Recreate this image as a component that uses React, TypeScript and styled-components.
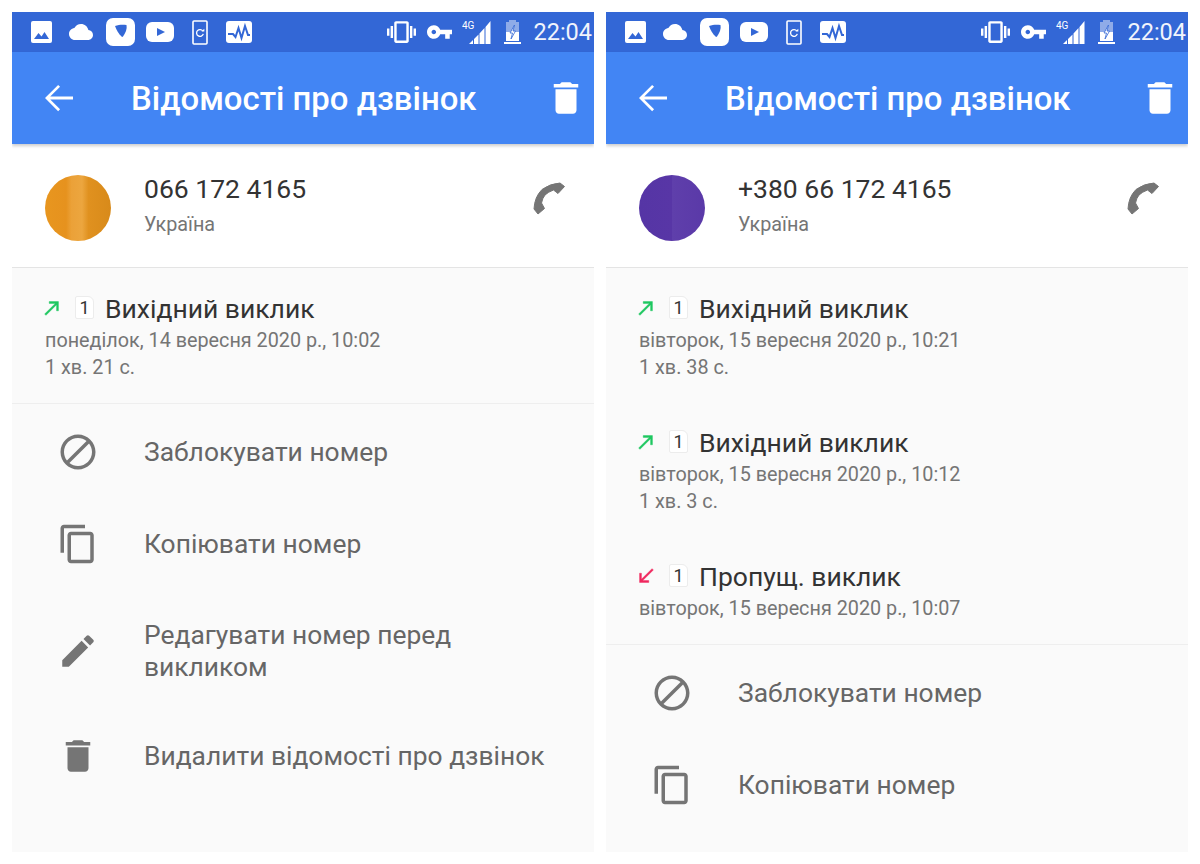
import styled, { createGlobalStyle } from 'styled-components';

const Global = createGlobalStyle`
  html, body { margin: 0; padding: 0; background: #fff; }
  body { font-family: Roboto, "Noto Sans", sans-serif; }
`;

const Page = styled.div`
  display: flex;
  gap: 12px;
  padding: 12px;
  width: 1200px;
  height: 864px;
  box-sizing: border-box;
`;
const Phone = styled.div`
  width: 582px;
  height: 840px;
  overflow: hidden;
  flex-shrink: 0;
  background: #fafafa;
`;
const StatusBar = styled.div`
  height: 40px;
  background: #3367d6;
  display: flex;
  align-items: center;
  padding-left: 19px;
  color: #fff;
`;
const StatusIcon = styled.svg<{ $ml?: number }>`
  display: block;
  flex-shrink: 0;
  fill: #fff;
  margin-left: ${p => p.$ml || 0}px;
`;
const Spacer = styled.div`
  flex: 1;
`;
const Clock = styled.span`
  font-size: 23.5px;
  margin-left: 12px;
  margin-right: 2px;
  color: #f1f4fc;
`;
const AppBar = styled.div`
  height: 92px;
  background: #4285f4;
  display: flex;
  align-items: center;
  padding: 0 7px 0 26px;
  box-shadow: 0 2px 3px rgba(0, 0, 0, 0.2);
  position: relative;
  color: #fff;
`;
const Title = styled.h1`
  flex: 1;
  margin: 2px 0 0 51px;
  font-size: 32.9px;
  font-weight: 500;
  line-height: 40px;
`;
const Icon = styled.svg<{ $color?: string }>`
  width: 42px;
  height: 42px;
  flex-shrink: 0;
  display: block;
  fill: ${p => p.$color || '#757575'};
`;
const ContactRow = styled.div`
  height: 123px;
  background: #fff;
  border-bottom: 1px solid #e4e4e4;
  display: flex;
  align-items: center;
  padding: 0 28px 0 33px;
`;
const Avatar = styled.div<{ $kind: 'orange' | 'purple' }>`
  width: 66px;
  height: 66px;
  border-radius: 50%;
  flex-shrink: 0;
  margin-top: 5px;
  background: ${p =>
    p.$kind === 'orange'
      ? 'linear-gradient(90deg, #e8961f 0%, #e6921e 32%, #eba138 40%, #eca63f 56%, #e0911f 66%, #d88a1a 100%)'
      : 'linear-gradient(90deg, #5535a5 0%, #5836a6 50%, #5f3fab 50%, #5a39a8 100%)'};
`;
const ContactText = styled.div`
  flex: 1;
  margin-left: 33px;
  margin-top: -3px;
`;
const Number = styled.div`
  font-size: 26.5px;
  line-height: 34px;
  color: #333;
`;
const Country = styled.div`
  font-size: 19.8px;
  line-height: 24px;
  margin-top: 7px;
  color: #757575;
`;
const PhoneGlyph = styled.svg`
  width: 33px;
  height: 33px;
  flex-shrink: 0;
  margin-top: -14px;
`;
const CallList = styled.div`
  display: flex;
  flex-direction: column;
  gap: 45px;
  padding: 24px 33px 22px;
  border-bottom: 1px solid #eeeeee;
`;
const CallHead = styled.div`
  display: flex;
  align-items: center;
  height: 35px;
`;
const ArrowIcon = styled.svg<{ $color: string }>`
  width: 22px;
  height: 22px;
  fill: ${p => p.$color};
  stroke: ${p => p.$color};
  stroke-width: 0.5;
  margin: -3px 0 0 -4px;
  flex-shrink: 0;
`;
const SimBadge = styled.span`
  width: 19px;
  height: 23px;
  margin: -5px 11px 0 12px;
  background: #fff;
  border: 1px solid #ececec;
  border-radius: 2px 6px 2px 2px;
  box-sizing: border-box;
  display: flex;
  align-items: center;
  justify-content: center;
  font-size: 18px;
  color: #333;
`;
const CallType = styled.span`
  font-size: 26.5px;
  margin-top: -3px;
  color: #333;
`;
const CallMeta = styled.div`
  font-size: 19.8px;
  line-height: 27px;
  color: #757575;
`;
const ActionList = styled.div`
  padding-top: 2px;
`;
const ActionRow = styled.div<{ $h?: number }>`
  display: flex;
  align-items: center;
  height: ${p => p.$h || 92}px;
  padding-left: 45px;
`;
const ActionLabel = styled.div`
  margin-left: 45px;
  font-size: 26.4px;
  line-height: 32px;
  color: #666;
  max-width: 410px;
`;

const BLUE = '#3367d6';

const paths = {
  back: 'M20 11.200H7l5.600-5.600L11.500 4.500 4 12l7.500 7.500 1.100-1.100L7 12.800h13z',
  trash: 'M6 19c0 1.100.9 2 2 2h8c1.100 0 2-.9 2-2V7H6v12zM19 4h-3.500l-1-1h-5l-1 1H5v2h14V4z',
  block:
    'M12 2C6.480 2 2 6.480 2 12s4.480 10 10 10 10-4.480 10-10S17.520 2 12 2zM4 12c0-4.420 3.580-8 8-8 1.850 0 3.550.63 4.900 1.690L5.690 16.900C4.630 15.550 4 13.850 4 12zm8 8c-1.850 0-3.550-.63-4.900-1.690L18.310 7.100C19.370 8.450 20 10.150 20 12c0 4.420-3.580 8-8 8z',
  copy:
    'M16 1H4c-1.100 0-2 .9-2 2v14h2V3h12V1zm3 4H8c-1.100 0-2 .9-2 2v14c0 1.100.9 2 2 2h11c1.100 0 2-.9 2-2V7c0-1.100-.9-2-2-2zm0 16H8V7h11v14z',
  edit:
    'M3 17.250V21h3.750L17.810 9.940l-3.750-3.750L3 17.250zM20.710 7.040c.39-.39.39-1.020 0-1.410l-2.340-2.340c-.39-.39-1.020-.39-1.410 0l-1.830 1.830 3.750 3.750 1.830-1.830z',
  made: 'M9 5v2h6.590L4 18.590 5.410 20 17 8.410V15h2V5z',
  received: 'M20 5.410L18.590 4 7 15.590V9H5v10h10v-2H8.410z',
};

function Status() {
  return (
    <StatusBar>
      <StatusIcon width="21" height="22" viewBox="0 0 21 22">
        <rect width="21" height="22" rx="2" />
        <path d="M3 18l4.500-6 3 3.500 3-4.500L18 18z" fill={BLUE} />
      </StatusIcon>
      <StatusIcon width="26" height="16" viewBox="0 4 24 16" $ml={16}>
        <path d="M19.350 10.040C18.670 6.590 15.640 4 12 4 9.110 4 6.600 5.640 5.350 8.040 2.340 8.360 0 10.910 0 14c0 3.310 2.690 6 6 6h13c2.760 0 5-2.240 5-5 0-2.640-2.050-4.780-4.650-4.960z" />
      </StatusIcon>
      <StatusIcon width="29" height="28" viewBox="0 0 29 28" $ml={12}>
        <rect width="29" height="28" rx="7" />
        <path d="M9 8c4-1.500 8-1.500 11.500-1 .8 4-1 8-3.500 11.500-.5.6-1 .6-1.500.1C12.500 15.500 10.500 12 9 8z" fill={BLUE} />
      </StatusIcon>
      <StatusIcon width="28" height="20" viewBox="0 0 28 20" $ml={11}>
        <rect width="28" height="20" rx="6" />
        <path d="M11 6l8 4-8 4z" fill={BLUE} />
      </StatusIcon>
      <StatusIcon width="16" height="25" viewBox="0 0 16 25" $ml={18}>
        <rect x="1" y="1" width="14" height="23" rx="1" fill="none" stroke="#fff" strokeWidth="1.6" />
        <path d="M10.800 11a3.400 3.400 0 1 0 .5 2.800" fill="none" stroke="#fff" strokeWidth="1.300" />
        <path d="M9.500 11.500h2.800V8.800z" />
      </StatusIcon>
      <StatusIcon width="26" height="22" viewBox="0 0 26 22" $ml={18}>
        <rect width="26" height="22" rx="3" />
        <path d="M2 13h5l2.500 3 3-9 3 10 3.500-12 3 9h2" fill="none" stroke={BLUE} strokeWidth="2" />
      </StatusIcon>
      <Spacer />
      <StatusIcon width="29" height="24" viewBox="0 3 24 18">
        <path d="M0 15h2V9H0v6zm3 2h2V7H3v10zm19-8v6h2V9h-2zm-3 8h2V7h-2v10zM16.500 3h-9C6.670 3 6 3.670 6 4.500v15c0 .83.67 1.500 1.500 1.500h9c.83 0 1.500-.67 1.500-1.500v-15c0-.83-.67-1.500-1.500-1.500zM16 19H8V5h8v14z" />
      </StatusIcon>
      <StatusIcon width="25" height="14" viewBox="1 6 22 12" $ml={11}>
        <path d="M12.650 10C11.830 7.670 9.610 6 7 6c-3.310 0-6 2.690-6 6s2.690 6 6 6c2.610 0 4.830-1.670 5.650-4H17v4h4v-4h2v-4H12.650zM7 14c-1.100 0-2-.9-2-2s.9-2 2-2 2 .9 2 2-.9 2-2 2z" />
      </StatusIcon>
      <StatusIcon width="30" height="25" viewBox="0 0 30 25" $ml={10}>
        <text x="0" y="9" fontSize="10" fontFamily="Roboto, sans-serif" fill="#fff">4G</text>
        <path d="M7 24l4-4v4zM12 24v-5l4.500-4.500V24zM17.500 24V13.500l5-5.500v16zM23.500 24V7l5-6v23z" />
      </StatusIcon>
      <StatusIcon width="17" height="24" viewBox="0 0 17 24" $ml={12}>
        <path d="M5 0h7v2h3v19H2V2h3z" fill="#fff" opacity="0.45" />
        <path d="M2 12h13v9H2zM0 22h17v2H0z" />
        <path d="M10.500 5L6 13h2.500l-1.500 6 4.500-8H9z" fill="#fff" stroke={BLUE} strokeWidth="0.8" />
      </StatusIcon>
      <Clock>22:04</Clock>
    </StatusBar>
  );
}

type Call = { out: boolean; type: string; date: string; length?: string };

function CallItem({ call }: { call: Call }) {
  return (
    <div>
      <CallHead>
        <ArrowIcon viewBox="0 0 24 24" $color={call.out ? '#1fc760' : '#f0285e'}>
          <path d={call.out ? paths.made : paths.received} />
        </ArrowIcon>
        <SimBadge>1</SimBadge>
        <CallType>{call.type}</CallType>
      </CallHead>
      <CallMeta>{call.date}</CallMeta>
      {call.length && <CallMeta>{call.length}</CallMeta>}
    </div>
  );
}

type Action = { icon: string; label: string; h?: number };

function CallDetails({ avatar, number, calls, actions }: {
  avatar: 'orange' | 'purple';
  number: string;
  calls: Call[];
  actions: Action[];
}) {
  return (
    <Phone>
      <Status />
      <AppBar>
        <Icon viewBox="0 0 24 24" $color="#fff"><path d={paths.back} /></Icon>
        <Title>Відомості про дзвінок</Title>
        <Icon viewBox="0 0 24 24" $color="#fff"><path d={paths.trash} /></Icon>
      </AppBar>
      <ContactRow>
        <Avatar $kind={avatar} />
        <ContactText>
          <Number>{number}</Number>
          <Country>Україна</Country>
        </ContactText>
        <PhoneGlyph viewBox="0 0 33 33">
          <path
            d="M27 1l4.500 3.500-6.500 7-4.500-3.500Q15 10 12 13 9.500 16 8.500 21l3 5.500L5 32l-4-5Q1.500 15 9 7.500 17 1.500 27 1z"
            fill="#757575"
            stroke="#757575"
            strokeWidth="1"
            strokeLinejoin="round"
          />
        </PhoneGlyph>
      </ContactRow>
      <CallList>
        {calls.map((c, i) => <CallItem key={i} call={c} />)}
      </CallList>
      <ActionList>
        {actions.map(a => (
          <ActionRow key={a.label} $h={a.h}>
            <Icon viewBox="0 0 24 24"><path d={a.icon} /></Icon>
            <ActionLabel>{a.label}</ActionLabel>
          </ActionRow>
        ))}
      </ActionList>
    </Phone>
  );
}

const leftCalls: Call[] = [
  { out: true, type: 'Вихідний виклик', date: 'понеділок, 14 вересня 2020 р., 10:02', length: '1 хв. 21 с.' },
];
const rightCalls: Call[] = [
  { out: true, type: 'Вихідний виклик', date: 'вівторок, 15 вересня 2020 р., 10:21', length: '1 хв. 38 с.' },
  { out: true, type: 'Вихідний виклик', date: 'вівторок, 15 вересня 2020 р., 10:12', length: '1 хв. 3 с.' },
  { out: false, type: 'Пропущ. виклик', date: 'вівторок, 15 вересня 2020 р., 10:07' },
];
const leftActions: Action[] = [
  { icon: paths.block, label: 'Заблокувати номер' },
  { icon: paths.copy, label: 'Копіювати номер' },
  { icon: paths.edit, label: 'Редагувати номер перед викликом', h: 122 },
  { icon: paths.trash, label: 'Видалити відомості про дзвінок', h: 88 },
];

export default function App() {
  return (
    <Page>
      <Global />
      <CallDetails avatar="orange" number="066 172 4165" calls={leftCalls} actions={leftActions} />
      <CallDetails avatar="purple" number="+380 66 172 4165" calls={rightCalls} actions={leftActions.slice(0, 2)} />
    </Page>
  );
}
